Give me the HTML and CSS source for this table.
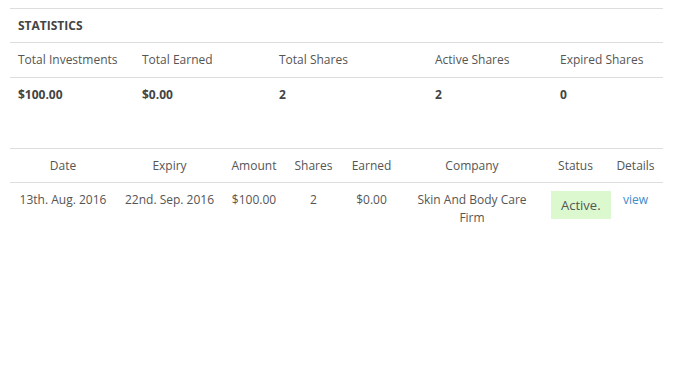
FILE: index.html
```html
<!DOCTYPE html>
<html>
<head>
    <title>Investments</title>
    <link rel="stylesheet" href="styles.css">
</head>
<body>
    <div class="wrapper">
        <table class="stats-table">
            <colgroup>
                <col style="width: 124px">
                <col style="width: 137px">
                <col style="width: 156px">
                <col style="width: 125px">
                <col style="width: 111px">
            </colgroup>
            <tr>
                <th colspan="5" class="stats-title">Statistics</th>
            </tr>
            <tr>
                <td>Total Investments</td>
                <td>Total Earned</td>
                <td>Total Shares</td>
                <td>Active Shares</td>
                <td>Expired Shares</td>
            </tr>
            <tr class="stats-values">
                <td>$100.00</td>
                <td>$0.00</td>
                <td>2</td>
                <td>2</td>
                <td>0</td>
            </tr>
        </table>

        <table class="shares-table">
            <colgroup>
                <col style="width: 106px">
                <col style="width: 107px">
                <col style="width: 62px">
                <col style="width: 57px">
                <col style="width: 59px">
                <col style="width: 142px">
                <col style="width: 65px">
                <col style="width: 55px">
            </colgroup>
            <thead>
                <tr>
                    <th>Date</th>
                    <th>Expiry</th>
                    <th>Amount</th>
                    <th>Shares</th>
                    <th>Earned</th>
                    <th>Company</th>
                    <th>Status</th>
                    <th>Details</th>
                </tr>
            </thead>
            <tbody>
                <tr>
                    <td>13th. Aug. 2016</td>
                    <td>22nd. Sep. 2016</td>
                    <td>$100.00</td>
                    <td>2</td>
                    <td>$0.00</td>
                    <td>Skin And Body Care Firm</td>
                    <td class="status-cell"><span class="status active">Active.</span></td>
                    <td><a href="#">view</a></td>
                </tr>
            </tbody>
        </table>
    </div>
</body>
</html>
```

FILE: styles.css
```css
* {
    box-sizing: border-box;
}

body {
    margin: 0;
    font-family: 'Open Sans', sans-serif;
    font-size: 12px;
    color: #555;
    background: #fff;
}

.wrapper {
    width: 653px;
    margin-left: 10px;
    padding-top: 8px;
}

table {
    width: 100%;
    border-collapse: collapse;
    table-layout: fixed;
}

th, td {
    padding: 8px;
    line-height: 18px;
    border-top: 1px solid #ddd;
    font-weight: normal;
    text-align: left;
    vertical-align: top;
}

th {
    line-height: 17px;
}

.stats-table {
    margin-bottom: 36px;
}

.stats-title {
    font-weight: bold;
    text-transform: uppercase;
    color: #444;
}

.stats-values td {
    font-weight: bold;
    color: #444;
}

.shares-table th,
.shares-table td {
    text-align: center;
}

.shares-table .status-cell {
    text-align: left;
    white-space: nowrap;
}

.status {
    display: inline-block;
    padding: 6px 10px 5px;
    font-size: 13px;
    line-height: 17px;
}

.status.active {
    background: #dcf8cf;
}

a {
    color: #428bca;
    text-decoration: none;
}
```
